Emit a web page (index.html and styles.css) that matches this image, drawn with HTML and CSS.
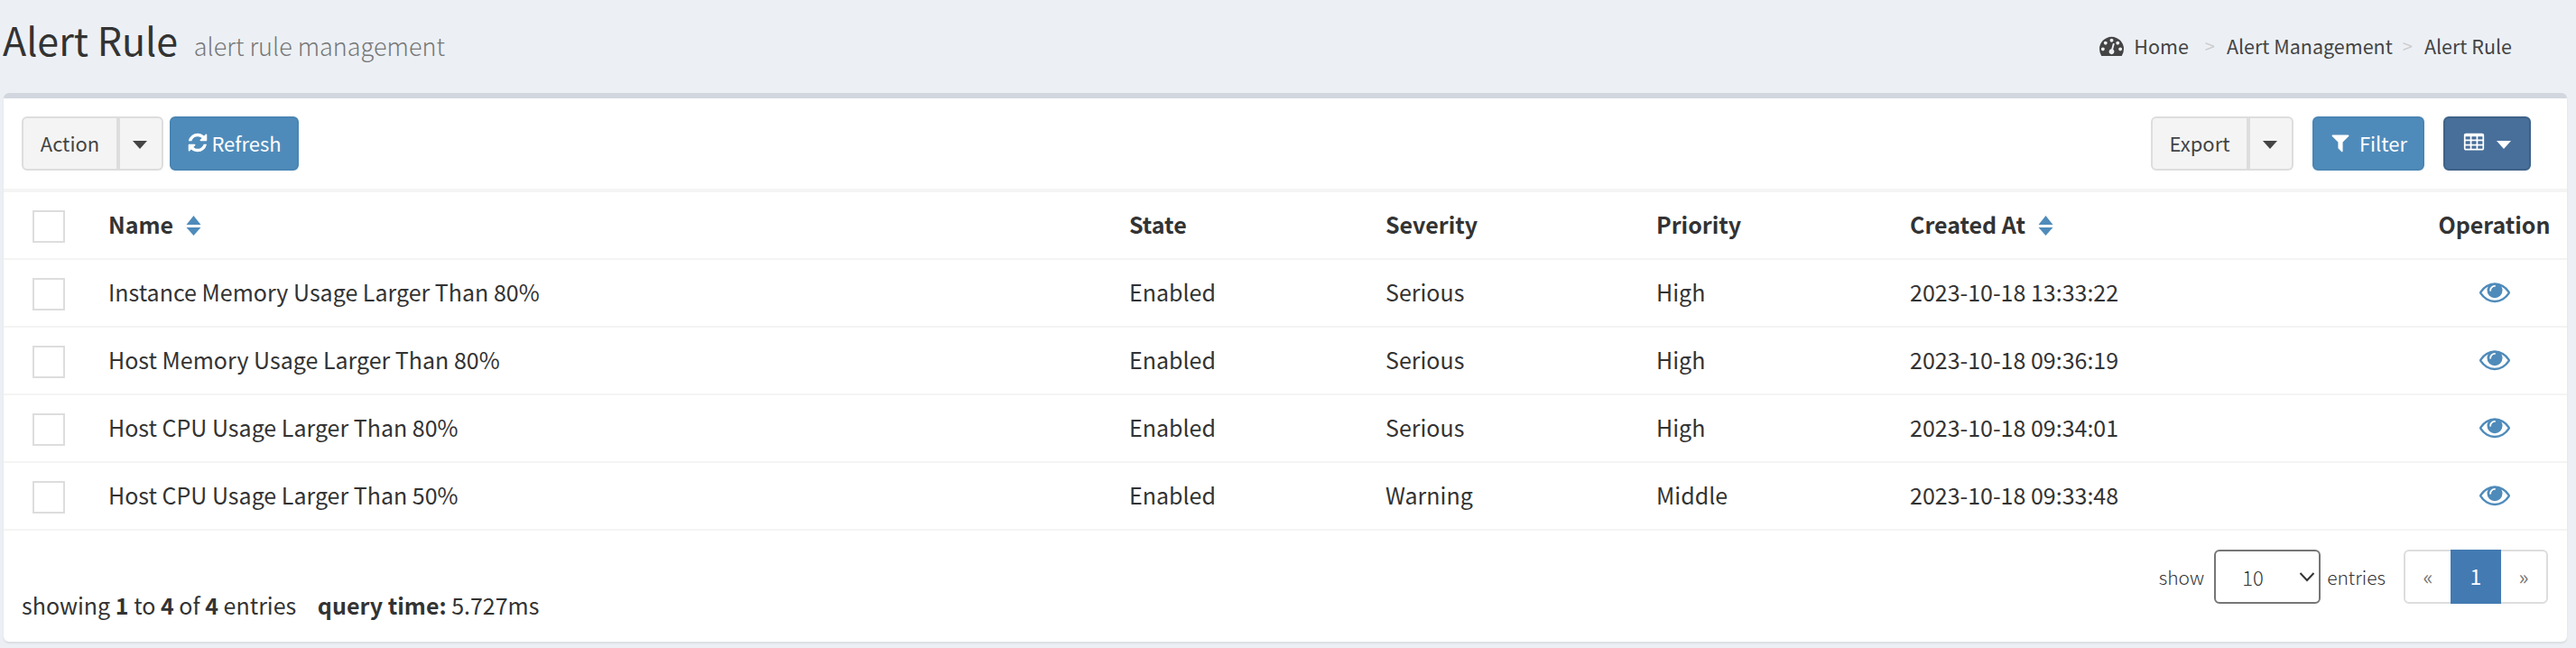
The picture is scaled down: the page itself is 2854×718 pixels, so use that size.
FILE: index.html
```html
<!DOCTYPE html>
<html lang="en">
<head>
<meta charset="utf-8">
<title>Alert Rule</title>
<link rel="stylesheet" href="styles.css">
</head>
<body>
<svg class="sprite" aria-hidden="true">
  <symbol id="i-eye" viewBox="0 0 1792 1792"><path d="M1664 960q-152-236-381-353 61 104 61 225 0 185-131.5 316.5t-316.5 131.5-316.5-131.5-131.5-316.5q0-121 61-225-229 117-381 353 133 205 333.5 326.5t434.5 121.5 434.5-121.5 333.5-326.5zm-720-384q0-20-14-34t-34-14q-125 0-214.5 89.5t-89.5 214.5q0 20 14 34t34 14 34-14 14-34q0-86 61-147t147-61q20 0 34-14t14-34zm848 384q0 34-20 69-140 230-376.5 368.5t-499.5 138.5-499.5-139-376.5-368q-20-35-20-69t20-69q140-229 376.5-368t499.5-139 499.5 139 376.5 368q20 35 20 69z"/></symbol>
  <symbol id="i-sort" viewBox="0 0 17 22"><path d="M8.500 0 16.500 10H.5zM.5 13H16.500L8.500 22z"/></symbol>
  <symbol id="i-caret" viewBox="0 0 16 9"><path d="M0 0h16L8 9z"/></symbol>
</svg>

<header class="page-head">
  <h1 class="title">Alert Rule <small class="subtitle">alert rule management</small></h1>
  <nav class="crumbs">
    <svg class="crumb-icon" viewBox="0 0 1792 1792"><path d="M384 1152q0-53-37.500-90.500t-90.500-37.500-90.500 37.500-37.500 90.500 37.500 90.500 90.500 37.500 90.500-37.500 37.500-90.500zm192-448q0-53-37.500-90.500t-90.500-37.500-90.500 37.500-37.500 90.500 37.500 90.500 90.500 37.500 90.500-37.500 37.500-90.500zm428 481l101-382q6-26-7.500-48.500t-38.500-29.500-48 6.500-30 39.500l-101 382q-60 5-107 43.500t-63 98.500q-20 77 20 146t117 89 146-20 89-117q16-60-6-117t-72-91zm660-33q0-53-37.500-90.500t-90.500-37.500-90.500 37.500-37.500 90.500 37.500 90.500 90.500 37.500 90.500-37.500 37.500-90.500zm-640-640q0-53-37.500-90.500t-90.500-37.500-90.500 37.500-37.500 90.500 37.500 90.500 90.500 37.500 90.500-37.500 37.500-90.500zm448 192q0-53-37.500-90.500t-90.500-37.500-90.500 37.500-37.500 90.500 37.500 90.500 90.500 37.500 90.500-37.500 37.500-90.500zm320 448q0 261-141 483-19 29-54 29h-1402q-35 0-54-29-141-221-141-483 0-182 71-348t191-286 286-191 348-71 348 71 286 191 191 286 71 348z"/></svg>
    <a class="crumb crumb-home">Home</a>
    <span class="sep">&gt;</span>
    <a class="crumb crumb-mid">Alert Management</a>
    <span class="sep">&gt;</span>
    <a class="crumb">Alert Rule</a>
  </nav>
</header>

<main class="card">
  <div class="toolbar">
    <div class="tools">
      <div class="split">
        <button class="btn btn-light btn-main btn-action">Action</button>
        <button class="btn btn-light btn-drop"><svg class="caret"><use href="#i-caret"/></svg></button>
      </div>
      <button class="btn btn-blue btn-refresh">
        <svg class="btn-icon" viewBox="0 0 1792 1792"><path d="M1639 1056q0 5-1 7-64 268-268 434.500t-478 166.500q-146 0-282.500-55t-243.500-157l-129 129q-19 19-45 19t-45-19-19-45v-448q0-26 19-45t45-19h448q26 0 45 19t19 45-19 45l-137 137q71 66 161 102t187 36q134 0 250-65t186-179q11-17 53-117 8-23 30-23h192q13 0 22.500 9.500t9.500 22.500zm25-800v448q0 26-19 45t-45 19h-448q-26 0-45-19t-19-45 19-45l138-138q-148-137-349-137-134 0-250 65t-186 179q-11 17-53 117-8 23-30 23h-199q-13 0-22.500-9.500t-9.500-22.500v-7q65-268 270-434.500t480-166.500q146 0 284 55.500t245 156.500l130-129q19-19 45-19t45 19 19 45z"/></svg>Refresh
      </button>
    </div>
    <div class="tools tools-right">
      <div class="split">
        <button class="btn btn-light btn-main btn-export">Export</button>
        <button class="btn btn-light btn-drop"><svg class="caret"><use href="#i-caret"/></svg></button>
      </div>
      <button class="btn btn-blue btn-filter">
        <svg class="btn-icon" viewBox="0 0 1792 1792"><path d="M1595 295q17 41-14 70l-493 493v742q0 42-39 59-13 5-25 5-27 0-45-19l-256-256q-19-19-19-45v-486l-493-493q-31-29-14-70 17-39 59-39h1280q42 0 59 39z"/></svg>Filter
      </button>
      <button class="btn btn-dark btn-columns">
        <svg class="btn-icon" viewBox="0 0 1792 1792"><path d="M576 1376v-192q0-14-9-23t-23-9h-320q-14 0-23 9t-9 23v192q0 14 9 23t23 9h320q14 0 23-9t9-23zm0-384v-192q0-14-9-23t-23-9h-320q-14 0-23 9t-9 23v192q0 14 9 23t23 9h320q14 0 23-9t9-23zm512 384v-192q0-14-9-23t-23-9h-320q-14 0-23 9t-9 23v192q0 14 9 23t23 9h320q14 0 23-9t9-23zm-512-768v-192q0-14-9-23t-23-9h-320q-14 0-23 9t-9 23v192q0 14 9 23t23 9h320q14 0 23-9t9-23zm512 384v-192q0-14-9-23t-23-9h-320q-14 0-23 9t-9 23v192q0 14 9 23t23 9h320q14 0 23-9t9-23zm512 384v-192q0-14-9-23t-23-9h-320q-14 0-23 9t-9 23v192q0 14 9 23t23 9h320q14 0 23-9t9-23zm-512-768v-192q0-14-9-23t-23-9h-320q-14 0-23 9t-9 23v192q0 14 9 23t23 9h320q14 0 23-9t9-23zm512 384v-192q0-14-9-23t-23-9h-320q-14 0-23 9t-9 23v192q0 14 9 23t23 9h320q14 0 23-9t9-23zm0-384v-192q0-14-9-23t-23-9h-320q-14 0-23 9t-9 23v192q0 14 9 23t23 9h320q14 0 23-9t9-23zm128-320v1088q0 66-47 113t-113 47h-1344q-66 0-113-47t-47-113v-1088q0-66 47-113t113-47h1344q66 0 113 47t47 113z"/></svg>
        <svg class="caret caret-white"><use href="#i-caret"/></svg>
      </button>
    </div>
  </div>

  <table class="grid">
    <colgroup>
      <col class="c-check"><col class="c-name"><col class="c-state"><col class="c-severity"><col class="c-priority"><col class="c-created"><col class="c-op">
    </colgroup>
    <thead>
      <tr>
        <th><span class="check"></span></th>
        <th>Name <svg class="sort"><use href="#i-sort"/></svg></th>
        <th>State</th>
        <th>Severity</th>
        <th>Priority</th>
        <th>Created At <svg class="sort"><use href="#i-sort"/></svg></th>
        <th class="op-cell">Operation</th>
      </tr>
    </thead>
    <tbody>
      <tr>
        <td><span class="check"></span></td>
        <td>Instance Memory Usage Larger Than 80%</td>
        <td>Enabled</td><td>Serious</td><td>High</td><td>2023-10-18 13:33:22</td>
        <td class="op-cell"><svg class="eye"><use href="#i-eye"/></svg></td>
      </tr>
      <tr>
        <td><span class="check"></span></td>
        <td>Host Memory Usage Larger Than 80%</td>
        <td>Enabled</td><td>Serious</td><td>High</td><td>2023-10-18 09:36:19</td>
        <td class="op-cell"><svg class="eye"><use href="#i-eye"/></svg></td>
      </tr>
      <tr>
        <td><span class="check"></span></td>
        <td>Host CPU Usage Larger Than 80%</td>
        <td>Enabled</td><td>Serious</td><td>High</td><td>2023-10-18 09:34:01</td>
        <td class="op-cell"><svg class="eye"><use href="#i-eye"/></svg></td>
      </tr>
      <tr>
        <td><span class="check"></span></td>
        <td>Host CPU Usage Larger Than 50%</td>
        <td>Enabled</td><td>Warning</td><td>Middle</td><td>2023-10-18 09:33:48</td>
        <td class="op-cell"><svg class="eye"><use href="#i-eye"/></svg></td>
      </tr>
    </tbody>
  </table>

  <footer class="foot">
    <div class="summary">showing <b>1</b> to <b>4</b> of <b>4</b> entries <b class="qt">query time:</b> 5.727ms</div>
    <div class="paging">
      <span class="lbl">show</span>
      <span class="select-wrap">
        <select class="size"><option>10</option><option>20</option><option>50</option></select>
        <svg class="chev" viewBox="0 0 18 12"><path d="M1.500 2 9 10l7.500-8" /></svg>
      </span>
      <span class="lbl">entries</span>
      <div class="pager">
        <a class="pg">«</a><a class="pg pg-on">1</a><a class="pg">»</a>
      </div>
    </div>
  </footer>
</main>
</body>
</html>
```
FILE: styles.css
```css
* { box-sizing: border-box; }
html, body { margin: 0; height: 718px; overflow: hidden; }
body {
  background: #ecf0f5;
  color: #333;
  font-family: "Noto Sans CJK SC", "Source Sans Pro", "Noto Sans", sans-serif;
  font-size: 25px;
}
.sprite { display: none; }

.page-head {
  height: 103px;
  display: flex;
  justify-content: space-between;
  padding: 16px 71px 0 3px;
}
.title { margin: 0; font-size: 43px; line-height: 54px; font-weight: 400; }
.subtitle { font-size: 27px; font-weight: 300; color: #777; margin-left: 8px; }
.crumbs { display: flex; align-items: center; height: 24px; margin-top: 22px; font-size: 21.5px; color: #444; }
.crumb-icon { width: 27px; height: 27px; fill: #444; margin-right: 11px; }
.crumb-home { margin-right: 5px; }
.crumb-mid { margin-right: -2px; }
.sep { color: #ccc; margin: 0 13px; font-size: 20px; }

.card {
  margin: 0 10px 0 4px;
  height: 608px;
  background: #fff;
  border-top: 6px solid #d2d6de;
  border-radius: 6px;
  box-shadow: 0 2px 2px rgba(0, 0, 0, .08);
  display: flex;
  flex-direction: column;
}

.toolbar {
  height: 104px;
  padding: 20px 40px 0 20px;
  display: flex;
  justify-content: space-between;
  align-items: flex-start;
  border-bottom: 4px solid #f4f4f4;
}
.tools { display: flex; gap: 7px; }
.tools-right { gap: 21px; }
.split { display: flex; }
.btn {
  height: 60px;
  font: inherit;
  font-size: 22px;
  border: 2px solid;
  border-radius: 6px;
  padding: 0 0 3px;
  display: flex;
  align-items: center;
  justify-content: center;
}
.btn-light { background: #f4f4f4; border-color: #ddd; color: #444; }
.btn-main { border-radius: 6px 0 0 6px; }
.btn-drop { width: 50px; padding: 0; border-left-width: 0; border-radius: 0 6px 6px 0; box-shadow: inset 2px 0 0 #ddd; }
.btn-action { width: 107px; }
.btn-export { width: 108px; }
.btn-blue { background: #4f8bba; border-color: #4a85b3; color: #fff; }
.btn-dark { background: #486f9a; border-color: #3f6288; color: #fff; padding: 0; }
.btn-refresh { width: 143px; }
.btn-filter { width: 124px; }
.btn-columns { width: 97px; }
.btn-icon { width: 24px; height: 24px; fill: #fff; margin-right: 3px; }
.btn-filter .btn-icon { margin-right: 9px; }
.btn-columns .btn-icon { margin: 0 13px 3px 0; }
.caret { width: 16px; height: 9px; fill: #444; margin-top: 2px; }
.caret-white { fill: #fff; }

.grid { width: 2840px; table-layout: fixed; border-collapse: collapse; }
.c-check { width: 100px; }
.c-name { width: 1131px; }
.c-state { width: 284px; }
.c-severity { width: 300px; }
.c-priority { width: 281px; }
.c-created { width: 587px; }
.c-op { width: 157px; }
.grid th, .grid td {
  height: 75px;
  padding: 0 16px 3px;
  text-align: left;
  font-size: 25px;
  border-bottom: 2px solid #f4f4f4;
  white-space: nowrap;
}
.grid th { height: 74px; font-weight: 700; }
.grid .op-cell { text-align: center; padding: 0 4px 3px 0; }
.check {
  display: block;
  width: 36px;
  height: 36px;
  margin: 6px 0 0 16px;
  border: 2px solid #ddd;
  background: #fff;
}
.sort { width: 17px; height: 22px; fill: #4f8bba; vertical-align: -2px; margin-left: 8px; }
.eye { width: 34px; height: 34px; fill: #4f8bba; vertical-align: middle; margin-bottom: 4px; }

.foot {
  flex: 1;
  display: flex;
  justify-content: space-between;
  padding: 21px 20px 0 20px;
}
.summary { align-self: flex-end; padding-bottom: 23px; font-size: 25px; }
.qt { margin-left: 18px; }
.paging { display: flex; align-items: flex-start; font-size: 21px; font-weight: 300; color: #333; }
.lbl { height: 60px; display: flex; align-items: center; }
.select-wrap { position: relative; display: block; margin: 0 7px 0 11px; }
.size {
  display: block;
  width: 118px;
  height: 60px;
  appearance: none;
  -webkit-appearance: none;
  background: #fff;
  border: 2px solid #767676;
  border-radius: 6px;
  padding: 0 0 0 29px;
  font: inherit;
  font-size: 22px;
  color: #333;
}
.chev {
  position: absolute;
  right: 6px;
  top: 24px;
  width: 18px;
  height: 12px;
  fill: none;
  stroke: #333;
  stroke-width: 2;
  pointer-events: none;
}
.pager {
  display: flex;
  margin-left: 20px;
  margin-right: 1px;
  height: 60px;
  border: 2px solid #ddd;
  border-radius: 6px;
}
.pg {
  display: flex;
  align-items: center;
  justify-content: center;
  width: 50px;
  color: #777;
  font-weight: 400;
  font-size: 23px;
  padding-bottom: 3px;
}
.pg-on { width: 56px; margin: -2px 0; background: #437ab2; color: #fff; }
```
